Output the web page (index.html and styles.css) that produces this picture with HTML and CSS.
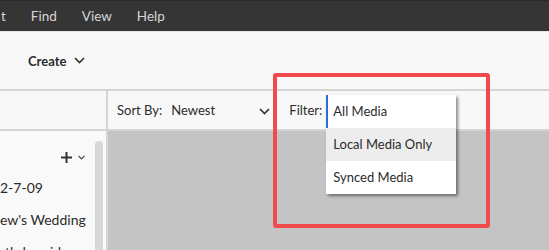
FILE: index.html
```html
<!DOCTYPE html>
<html lang="en">
<head>
    <meta charset="UTF-8">
    <meta name="viewport" content="width=device-width, initial-scale=1.0">
    <title>Media Organizer</title>
    <link rel="stylesheet" href="styles.css">
</head>
<body>
    <!-- Menu bar -->
    <nav class="menubar">
        <span class="menu-item menu-cut">t</span>
        <span class="menu-item">Find</span>
        <span class="menu-item">View</span>
        <span class="menu-item">Help</span>
    </nav>

    <!-- Toolbar -->
    <div class="toolbar">
        <button class="create-btn">Create
            <svg class="chevron" width="11" height="7" viewBox="0 0 11 7"><path d="M1 1l4.5 4.5L10 1" fill="none" stroke="#333" stroke-width="1.7"/></svg>
        </button>
    </div>

    <!-- Sort / filter bar -->
    <div class="sortbar">
        <div class="sortbar-side"></div>
        <div class="sortbar-main">
            <span class="label">Sort By:</span>
            <span class="sort-value">Newest</span>
            <svg class="chevron sort-chevron" width="11" height="7" viewBox="0 0 11 7"><path d="M1 1l4.5 4.5L10 1" fill="none" stroke="#333" stroke-width="1.7"/></svg>
            <span class="label filter-label">Filter:</span>
            <div class="filter">
                <ul class="dropdown">
                    <li class="option current">All Media</li>
                    <li class="option hover">Local Media Only</li>
                    <li class="option">Synced Media</li>
                </ul>
            </div>
        </div>
    </div>

    <!-- Content -->
    <div class="content">
        <aside class="side-panel">
            <div class="panel-tools">
                <svg width="11" height="11" viewBox="0 0 11 11"><path d="M5.5 0v11M0 5.5h11" stroke="#333" stroke-width="2"/></svg>
                <svg width="7" height="5" viewBox="0 0 7 5"><path d="M0.5 0.8l3 3 3-3" fill="none" stroke="#444" stroke-width="1.2"/></svg>
            </div>
            <ul class="albums">
                <li>2-7-09</li>
                <li>ew's Wedding</li>
                <li>rthday video</li>
            </ul>
            <div class="scrollbar"></div>
        </aside>
        <main class="grid-area"></main>
    </div>

    <!-- Annotation -->
    <div class="highlight"></div>
</body>
</html>
```

FILE: styles.css
```css
/* General page settings */
body {
    margin: 0;
    font-family: 'Lato', 'Open Sans', sans-serif;
    font-size: 14px;
    color: #2c2c2c;
    background: #c4c4c4;
    height: 250px;
    overflow: hidden;
}

/* Top menu bar */
.menubar {
    display: flex;
    align-items: center;
    height: 31px;
    background: #353535;
    border-top: 1px solid #2a2a2a;
    box-sizing: border-box;
    color: #d6d6d6;
    font-size: 13.5px;
}

.menu-item {
    margin-right: 25px;
}

.menu-cut {
    margin-left: 1px;
}

/* Toolbar */
.toolbar {
    display: flex;
    align-items: center;
    height: 57px;
    padding-left: 28px;
    background: #f8f8f8;
    border-top: 1px solid #e6e6e6;
    border-bottom: 2px solid #d5d5d5;
}

.create-btn {
    display: flex;
    align-items: center;
    gap: 8px;
    padding: 0;
    border: 0;
    background: none;
    font-family: inherit;
    font-size: 13px;
    font-weight: bold;
    color: #2c2c2c;
}

/* Sort / filter bar */
.sortbar {
    display: flex;
    height: 38px;
    background: #f8f8f8;
    border-bottom: 2px solid #d5d5d5;
}

.sortbar-side {
    width: 106px;
    border-right: 2px solid #d5d5d5;
}

.sortbar-main {
    display: flex;
    align-items: center;
    padding-left: 9px;
    font-size: 13px;
}

.sort-value {
    margin-left: 9px;
    width: 88px;
}

.sort-chevron {
    margin-top: 2px;
}

.filter-label {
    margin-left: 19px;
    margin-right: 4px;
}

.filter {
    position: relative;
    align-self: stretch;
    width: 130px;
}

/* Opened filter menu */
.dropdown {
    position: absolute;
    top: 4px;
    left: 0;
    width: 130px;
    margin: 0;
    padding: 0;
    list-style: none;
    background: #fff;
    box-shadow: 2px 2px 3px rgba(0, 0, 0, 0.45);
    z-index: 2;
}

.option {
    height: 33px;
    line-height: 33px;
    padding-left: 7px;
}

.option.current {
    border-left: 2px solid #2b6fd6;
    padding-left: 5px;
}

.option.hover {
    background: #ededed;
}

/* Content area */
.content {
    display: flex;
    height: 119px;
}

.side-panel {
    position: relative;
    width: 106px;
    overflow: hidden;
    background: #f9f9f9;
    border-right: 2px solid #d5d5d5;
}

.panel-tools {
    display: flex;
    align-items: center;
    gap: 6px;
    padding: 21px 0 0 61px;
}

.albums {
    margin: 0;
    padding: 0;
    list-style: none;
    font-size: 14px;
}

.albums li {
    height: 32px;
    line-height: 32px;
}

.albums li:first-child {
    margin-top: 9px;
}

.scrollbar {
    position: absolute;
    top: 10px;
    right: 3px;
    bottom: 0;
    width: 8px;
    border-radius: 4px 4px 0 0;
    background: #d7d7d7;
}

.grid-area {
    flex: 1;
    background: #c4c4c4;
}

/* Red annotation box */
.highlight {
    position: absolute;
    left: 273px;
    top: 73px;
    width: 209px;
    height: 147px;
    border: 4px solid #f04a4c;
    border-radius: 3px;
    z-index: 3;
}
```
